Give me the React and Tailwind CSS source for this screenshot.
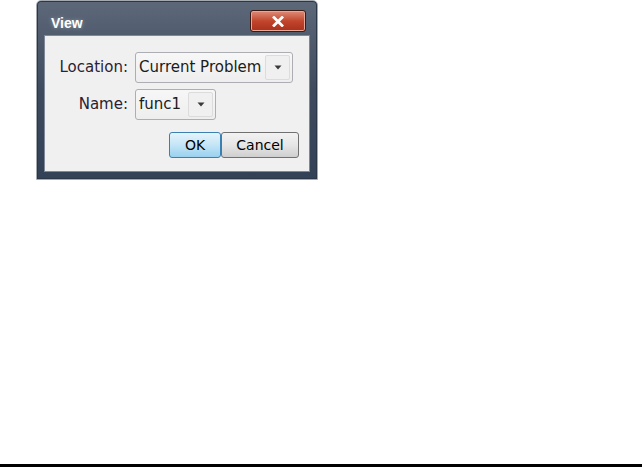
import React from 'react';

const Arrow = () => (
  <svg width="8" height="5" viewBox="0 0 8 5">
    <path d="M0.5 0.5 L7.5 0.5 L4 4.5 Z" fill="#3a3a3a" />
  </svg>
);

const Select = ({ value, width }) => (
  <div
    className={`flex items-center justify-between h-[31px] ${width} rounded-[3px] border border-[#acaeb4] bg-gradient-to-b from-[#f7f7f7] to-[#eeeeee] pl-[3px] pr-[2px]`}
  >
    <span className="text-[15px] text-[#1c1c1c] leading-none whitespace-nowrap">{value}</span>
    <div className="flex items-center justify-center w-[25px] h-[25px] shrink-0 rounded-[2px] border border-[#dcdcdc] bg-[#f0f0f0]">
      <Arrow />
    </div>
  </div>
);

const App = () => {
  return (
    <div className="flex flex-col w-[642px] h-[467px] bg-white" style={{ fontFamily: '"DejaVu Sans", sans-serif' }}>
      {/* Dialog */}
      <div className="ml-[36px] w-[282px] h-[180px] flex flex-col rounded-t-[5px] border border-[#a4a9b0] bg-gradient-to-b from-[#5d6879] via-[#3e4b5e] to-[#334157] shadow-[inset_0_0_0_1px_#2b3648]">
        {/* Title bar */}
        <div className="flex items-start justify-between h-[34px] pl-[14px] pr-[11px]">
          <span
            className="mt-[15px] text-[14px] font-bold text-white leading-none"
            style={{ fontFamily: '"Liberation Sans", sans-serif', textShadow: '0 0 4px rgba(255,255,255,0.35)' }}
          >
            View
          </span>
          <div className="mt-[9px] flex items-center justify-center w-[56px] h-[22px] rounded-[3px] border border-[#3b1a14] bg-gradient-to-b from-[#dd8b78] via-[#c2452c] to-[#a8301c] shadow-[inset_0_0_0_1px_#e7a898]">
            <svg width="12" height="11" viewBox="0 0 12 11">
              <path d="M2 1.5 L10 9.5 M10 1.5 L2 9.5" stroke="#ffffff" strokeWidth="2.8" strokeLinecap="square" />
            </svg>
          </div>
        </div>

        {/* Client area */}
        <div className="mx-[7px] mb-[7px] flex-1 flex flex-col border border-[#7e8898] bg-[#f0f0f0]">
          <div className="mt-[16px] grid grid-cols-[83px_auto] gap-x-[7px] gap-y-[6px] items-center">
            <span className="text-right text-[15px] text-[#2a2230] leading-none whitespace-nowrap">Location:</span>
            <Select value="Current Problem" width="w-[158px]" />
            <span className="text-right text-[15px] text-[#2a2230] leading-none">Name:</span>
            <Select value="func1" width="w-[81px]" />
          </div>

          <div className="mt-[12px] mr-[10px] flex justify-end">
            <button className="w-[52px] h-[26px] rounded-[3px] border border-[#3c7fb1] bg-gradient-to-b from-[#e5f4fc] via-[#c4e5f6] to-[#98d1ef] text-[14px] text-black leading-none">
              OK
            </button>
            <button className="w-[78px] h-[26px] rounded-[3px] border border-[#707070] bg-gradient-to-b from-[#f2f2f2] via-[#e6e6e6] to-[#cfcfcf] text-[14px] text-black leading-none">
              Cancel
            </button>
          </div>
        </div>
      </div>

      <div className="flex-1" />
      <div className="h-[3px] bg-black" />
    </div>
  );
};

export default App;
